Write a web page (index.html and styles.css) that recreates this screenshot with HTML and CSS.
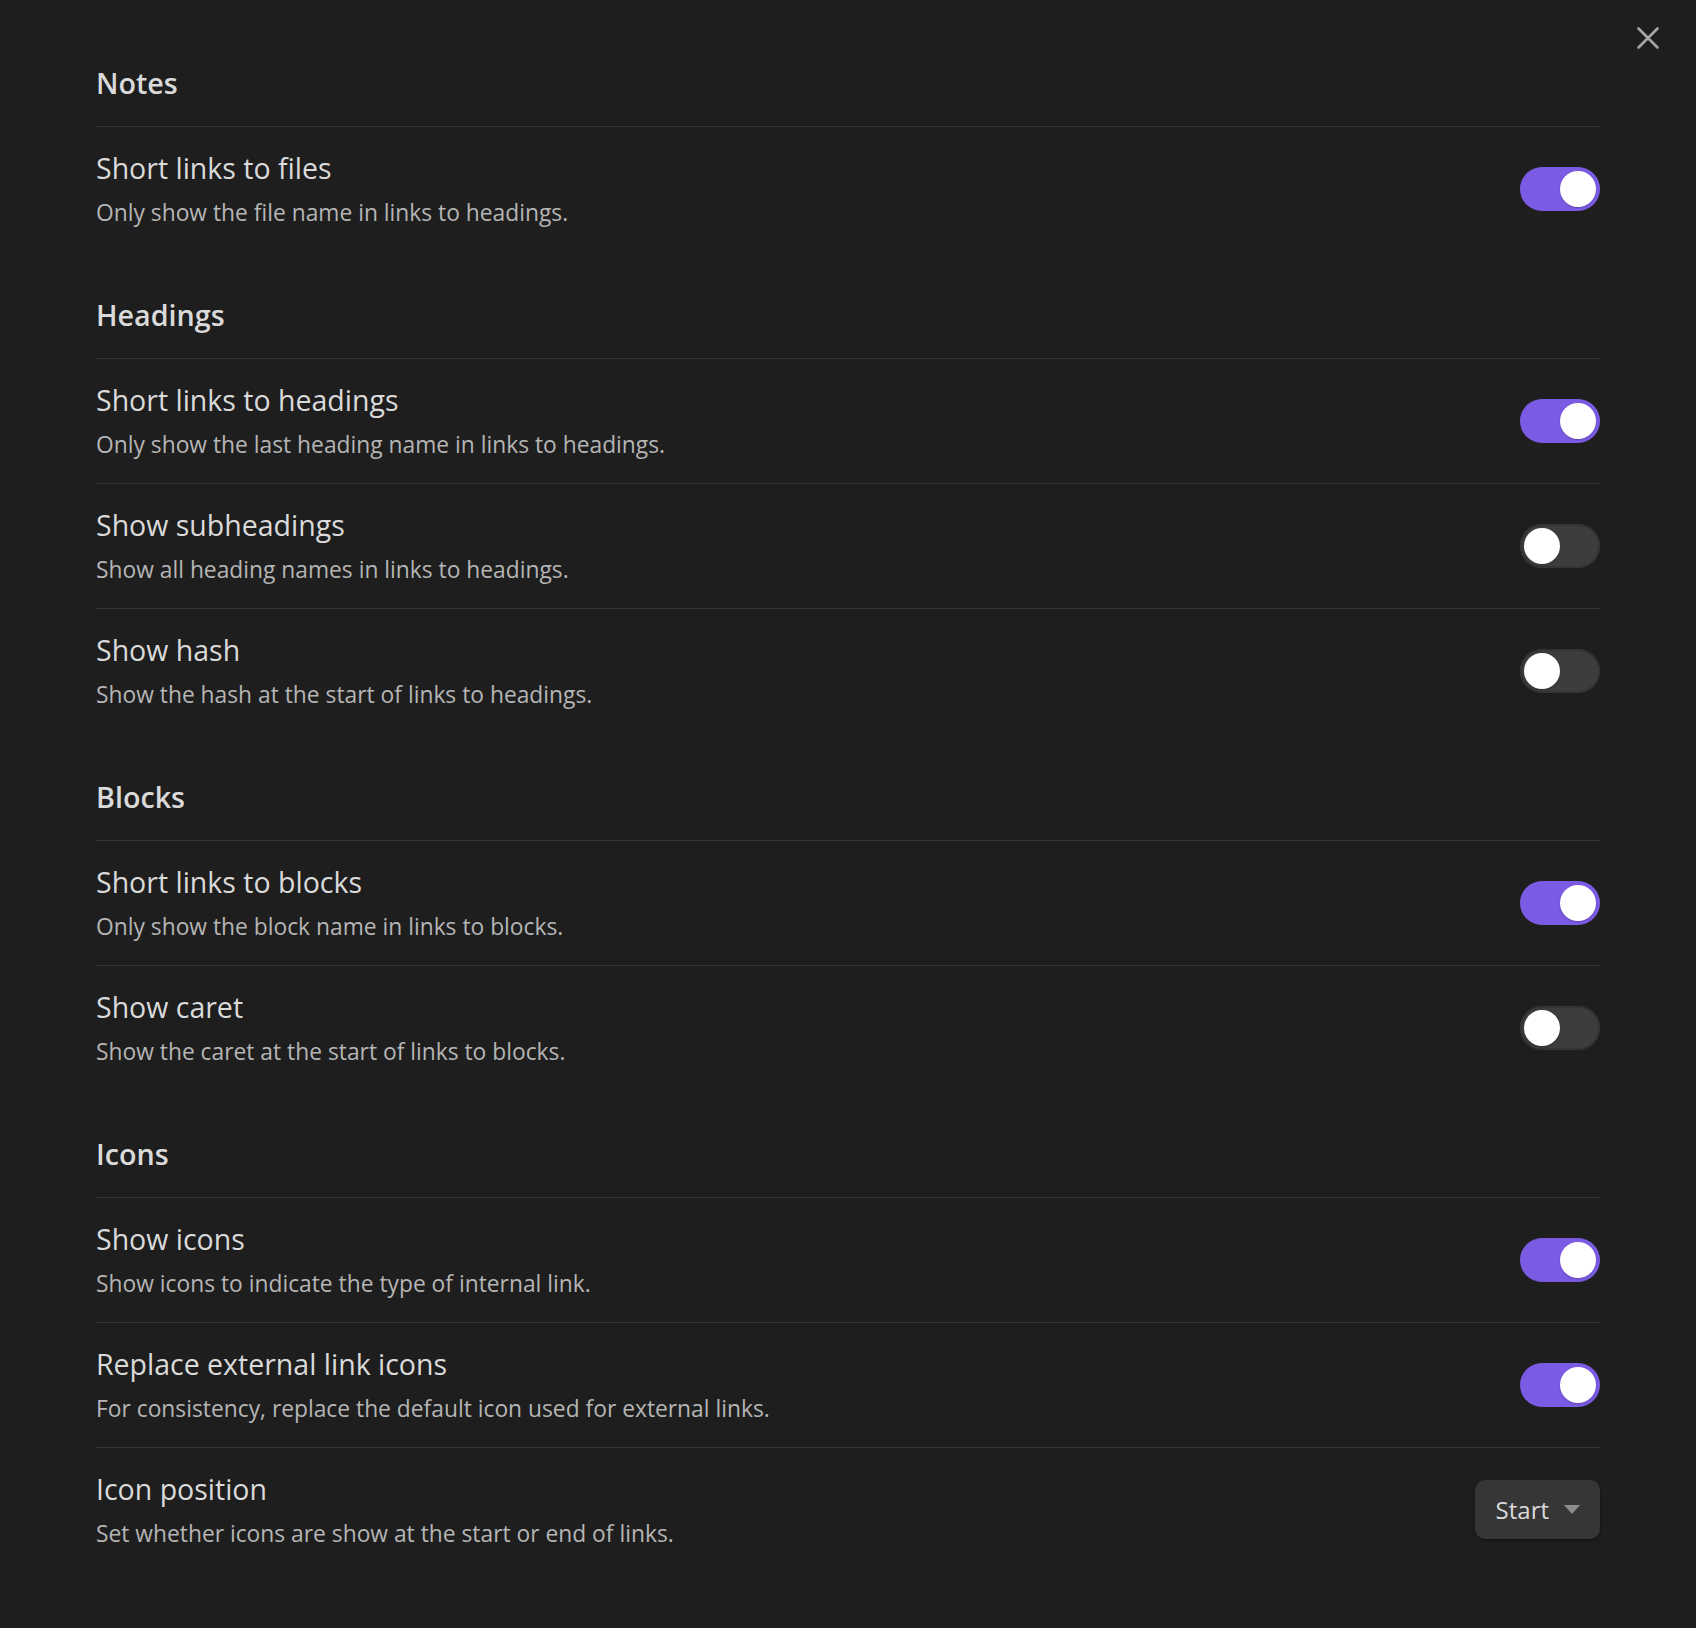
FILE: index.html
```html
<!DOCTYPE html>
<html lang="en">
<head>
<meta charset="utf-8">
<title>Settings</title>
<link rel="stylesheet" href="styles.css">
</head>
<body>
<div class="modal">
  <button class="close-btn" aria-label="Close">
    <svg width="22" height="22" viewBox="0 0 22 22"><path d="M1.5 1.5 L20.5 20.5 M20.5 1.5 L1.5 20.5" stroke="#a6a6a6" stroke-width="2.6" stroke-linecap="round" fill="none"/></svg>
  </button>
  <div class="content">
    <div class="heading first">Notes</div>
    <div class="setting-item">
      <div class="info">
        <div class="name">Short links to files</div>
        <div class="desc">Only show the file name in links to headings.</div>
      </div>
      <div class="toggle on"><span class="knob"></span></div>
    </div>

    <div class="heading">Headings</div>
    <div class="setting-item">
      <div class="info">
        <div class="name">Short links to headings</div>
        <div class="desc">Only show the last heading name in links to headings.</div>
      </div>
      <div class="toggle on"><span class="knob"></span></div>
    </div>
    <div class="setting-item">
      <div class="info">
        <div class="name">Show subheadings</div>
        <div class="desc">Show all heading names in links to headings.</div>
      </div>
      <div class="toggle"><span class="knob"></span></div>
    </div>
    <div class="setting-item">
      <div class="info">
        <div class="name">Show hash</div>
        <div class="desc">Show the hash at the start of links to headings.</div>
      </div>
      <div class="toggle"><span class="knob"></span></div>
    </div>

    <div class="heading">Blocks</div>
    <div class="setting-item">
      <div class="info">
        <div class="name">Short links to blocks</div>
        <div class="desc">Only show the block name in links to blocks.</div>
      </div>
      <div class="toggle on"><span class="knob"></span></div>
    </div>
    <div class="setting-item">
      <div class="info">
        <div class="name">Show caret</div>
        <div class="desc">Show the caret at the start of links to blocks.</div>
      </div>
      <div class="toggle"><span class="knob"></span></div>
    </div>

    <div class="heading">Icons</div>
    <div class="setting-item">
      <div class="info">
        <div class="name">Show icons</div>
        <div class="desc">Show icons to indicate the type of internal link.</div>
      </div>
      <div class="toggle on"><span class="knob"></span></div>
    </div>
    <div class="setting-item">
      <div class="info">
        <div class="name">Replace external link icons</div>
        <div class="desc">For consistency, replace the default icon used for external links.</div>
      </div>
      <div class="toggle on"><span class="knob"></span></div>
    </div>
    <div class="setting-item">
      <div class="info">
        <div class="name">Icon position</div>
        <div class="desc">Set whether icons are show at the start or end of links.</div>
      </div>
      <div class="dropdown">
        <span class="dd-label">Start</span>
        <svg class="dd-arrow" width="16" height="10" viewBox="0 0 16 10"><path d="M0 0 H16 L8 9 Z" fill="#8c8c8c"/></svg>
      </div>
    </div>
  </div>
</div>
</body>
</html>
```
FILE: styles.css
```css
html, body {
  margin: 0;
  padding: 0;
  background: #1e1e1e;
}
body {
  font-family: "Open Sans", "Noto Sans", sans-serif;
  color: #dadada;
  min-height: 1628px;
}
.modal {
  position: relative;
  min-height: 1628px;
}
.close-btn {
  position: absolute;
  top: 27px;
  right: 37px;
  width: 22px;
  height: 22px;
  padding: 0;
  margin: 0;
  border: 0;
  background: transparent;
  display: flex;
}
.content {
  padding: 63px 96px 56px 96px;
}
.heading {
  font-size: 28.7px;
  line-height: 39px;
  font-weight: 600;
  color: #dadada;
  padding-bottom: 24px;
  margin-top: 44px;
}
.heading.first {
  margin-top: 0;
}
.setting-item {
  display: flex;
  align-items: center;
  border-top: 1px solid #363636;
  padding: 22px 0 23px 0;
}
.info {
  flex: 1 1 auto;
  min-width: 0;
}
.name {
  font-size: 28.5px;
  line-height: 39px;
  color: #dadada;
}
.desc {
  font-size: 22.8px;
  line-height: 31px;
  color: #b5b5b5;
  margin-top: 9px;
}
.toggle {
  flex: 0 0 auto;
  width: 80px;
  height: 44px;
  box-sizing: border-box;
  padding: 4px;
  border-radius: 22px;
  background: #3d3d3d;
  box-shadow: inset 0 0 0 2px #343434;
  display: flex;
  justify-content: flex-start;
  align-items: center;
}
.toggle.on {
  background: #7b5be4;
  box-shadow: none;
  justify-content: flex-end;
}
.knob {
  width: 36px;
  height: 36px;
  border-radius: 50%;
  background: #ffffff;
  box-shadow: 0 1px 2px rgba(0, 0, 0, 0.2);
}
.dropdown {
  flex: 0 0 auto;
  height: 59px;
  box-sizing: border-box;
  display: flex;
  align-items: center;
  gap: 15px;
  padding: 0 20px 0 21px;
  background: #363636;
  border-radius: 10px;
  box-shadow: 0 1px 3px rgba(0, 0, 0, 0.45);
}
.dd-label {
  font-size: 24px;
  line-height: 32px;
  color: #dadada;
}
.dd-arrow {
  display: block;
}
```
